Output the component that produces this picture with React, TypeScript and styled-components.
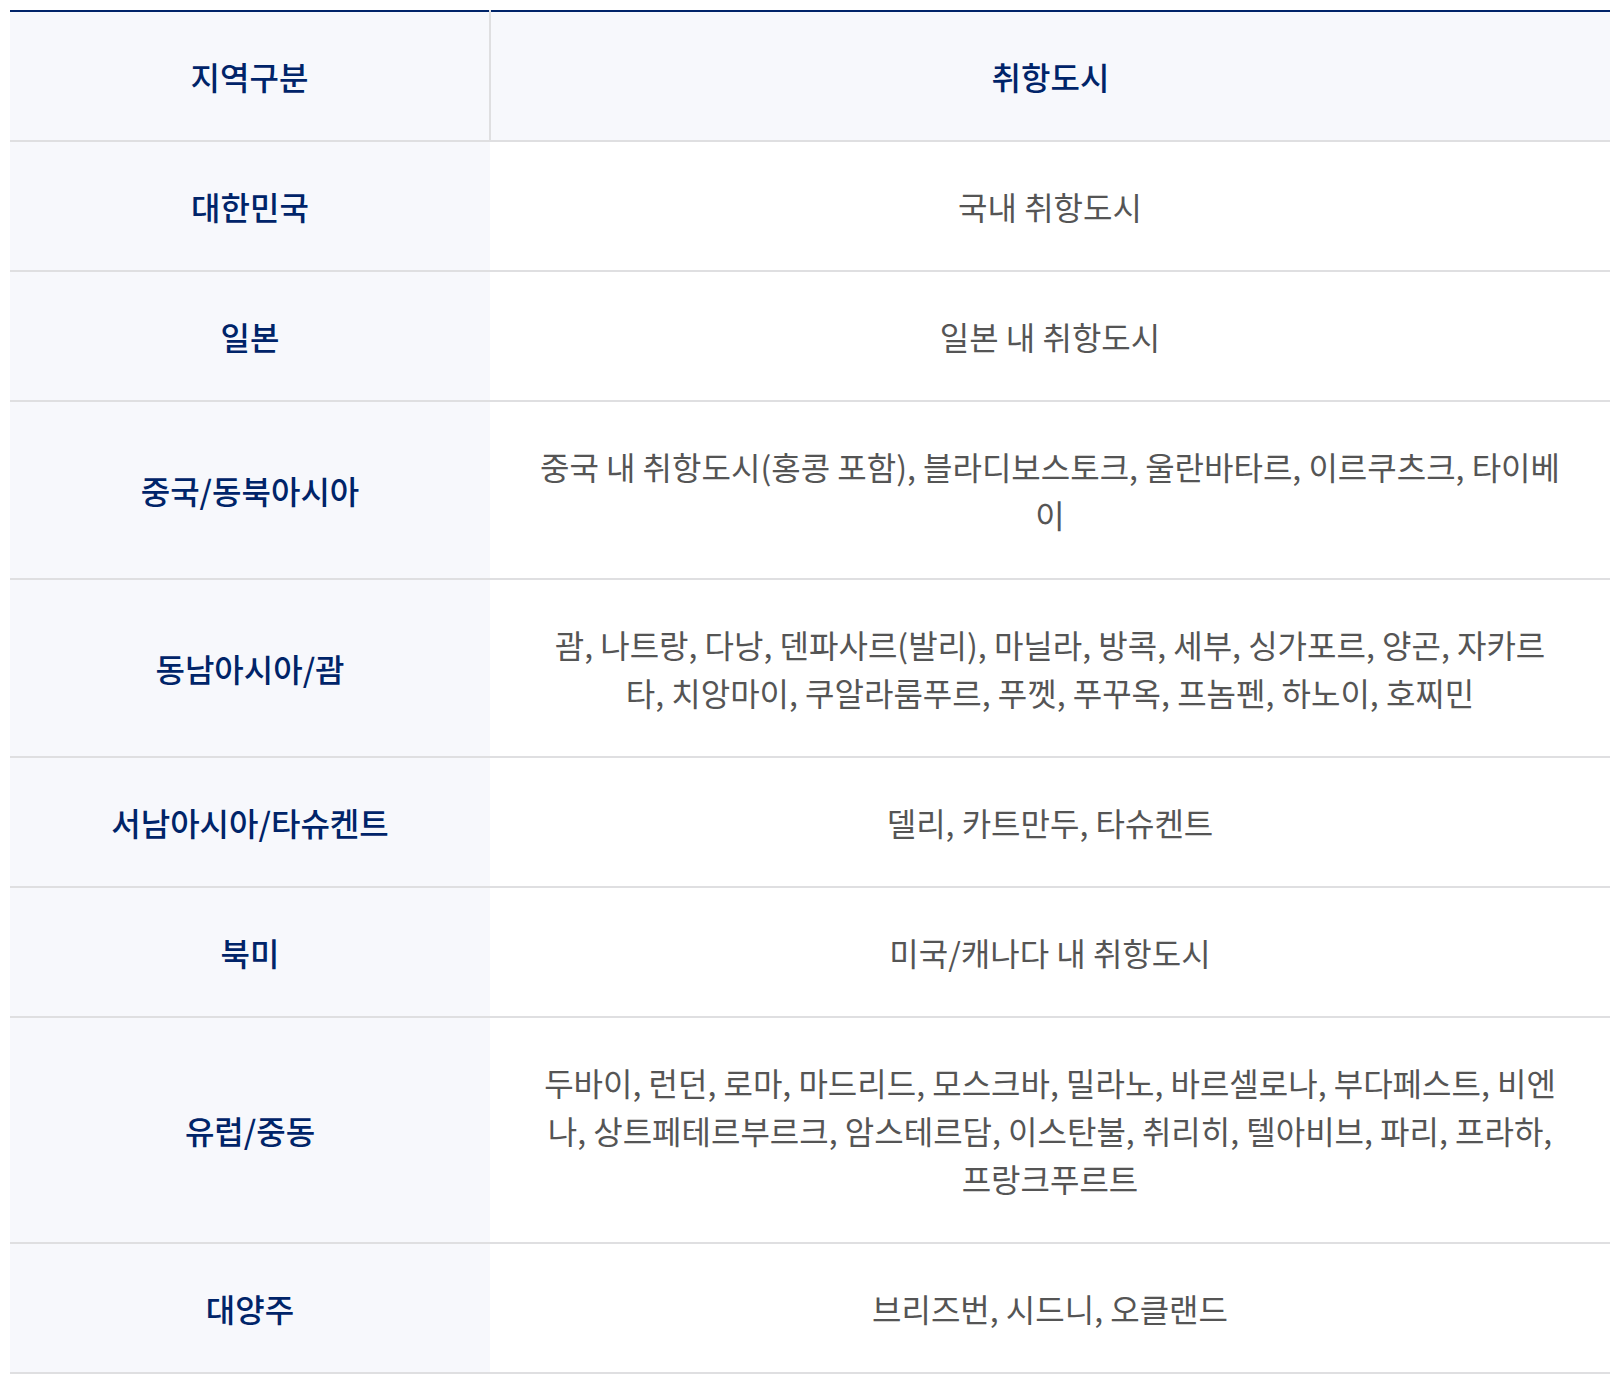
import React from 'react';
import styled, { createGlobalStyle } from 'styled-components';

const GlobalStyle = createGlobalStyle`
  body {
    margin: 0;
    padding: 10px 12px 0 10px;
    background: #fff;
    font-family: "Noto Sans CJK KR", "Noto Sans", sans-serif;
  }
`;

const Table = styled.table`
  width: 1600px;
  border-collapse: collapse;
  table-layout: fixed;
  border-top: 2px solid #002469;
  border-bottom: 2px solid #dfdfe1;
`;

const HeadCell = styled.th<{ $first?: boolean }>`
  height: 128px;
  padding: 0 40px;
  background: #f7f8fc;
  color: #002469;
  font-size: 32px;
  font-weight: 500;
  line-height: 48px;
  text-align: center;
  border-bottom: 2px solid #dfdfe1;
  border-right: ${p => (p.$first ? '2px solid #dfdfe1' : 'none')};
`;

const Row = styled.tr`
  border-bottom: 2px solid #dfdfe1;
  &:last-child {
    border-bottom: none;
  }
`;

const RegionCell = styled.th`
  padding: 40px;
  background: #f7f8fc;
  color: #002469;
  font-size: 32px;
  font-weight: 500;
  line-height: 48px;
  text-align: center;
`;

const CityCell = styled.td`
  padding: 40px 48px;
  background: #fff;
  color: #555;
  font-size: 32px;
  font-weight: 400;
  line-height: 48px;
  text-align: center;
  word-break: break-all;
`;

const rows: [string, string][] = [
  ['대한민국', '국내 취항도시'],
  ['일본', '일본 내 취항도시'],
  ['중국/동북아시아', '중국 내 취항도시(홍콩 포함), 블라디보스토크, 울란바타르, 이르쿠츠크, 타이베이'],
  ['동남아시아/괌', '괌, 나트랑, 다낭, 덴파사르(발리), 마닐라, 방콕, 세부, 싱가포르, 양곤, 자카르타, 치앙마이, 쿠알라룸푸르, 푸껫, 푸꾸옥, 프놈펜, 하노이, 호찌민'],
  ['서남아시아/타슈켄트', '델리, 카트만두, 타슈켄트'],
  ['북미', '미국/캐나다 내 취항도시'],
  ['유럽/중동', '두바이, 런던, 로마, 마드리드, 모스크바, 밀라노, 바르셀로나, 부다페스트, 비엔나, 상트페테르부르크, 암스테르담, 이스탄불, 취리히, 텔아비브, 파리, 프라하, 프랑크푸르트'],
  ['대양주', '브리즈번, 시드니, 오클랜드'],
];

export default function App() {
  return (
    <>
      <GlobalStyle />
      <Table>
        <colgroup>
          <col style={{ width: 480 }} />
          <col />
        </colgroup>
        <thead>
          <tr>
            <HeadCell $first>지역구분</HeadCell>
            <HeadCell>취항도시</HeadCell>
          </tr>
        </thead>
        <tbody>
          {rows.map(([region, cities]) => (
            <Row key={region}>
              <RegionCell scope="row">{region}</RegionCell>
              <CityCell>{cities}</CityCell>
            </Row>
          ))}
        </tbody>
      </Table>
    </>
  );
}
